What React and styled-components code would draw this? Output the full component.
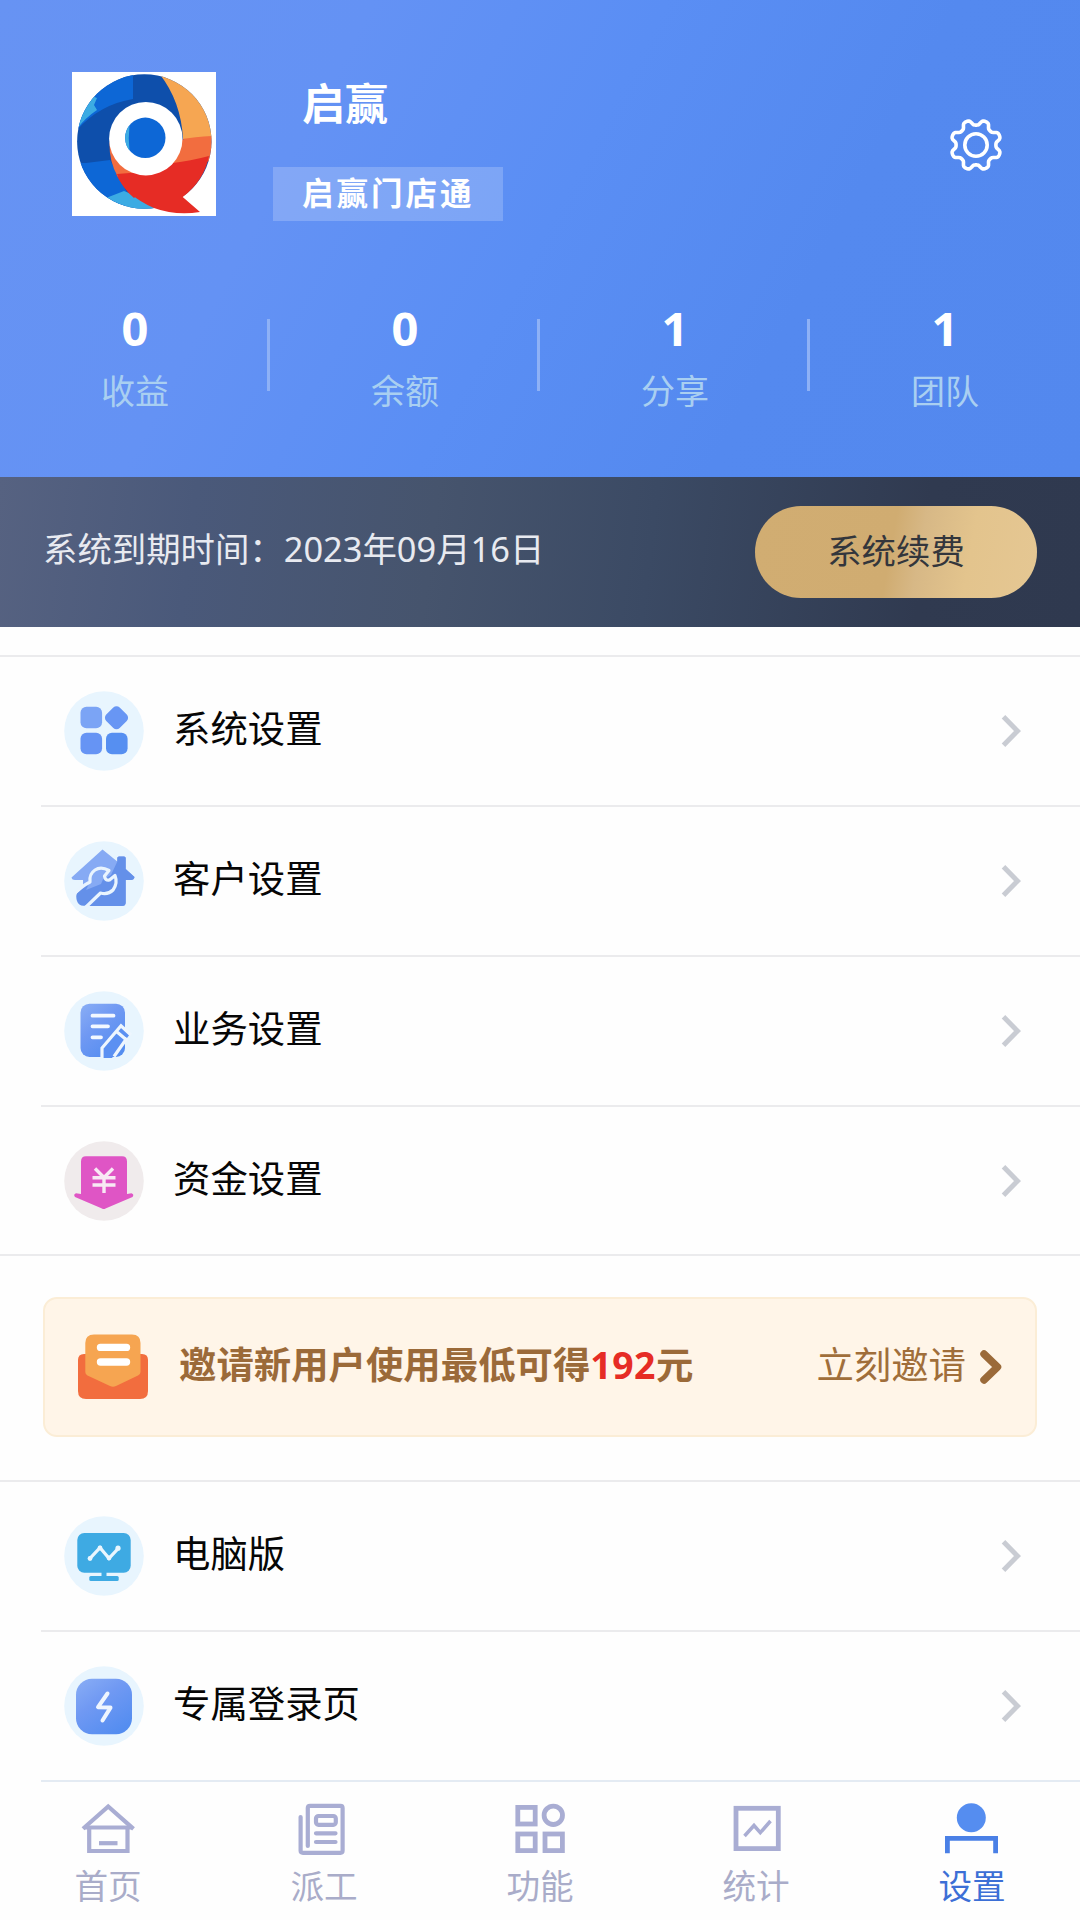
import React from "react";
import styled, { createGlobalStyle } from "styled-components";

const GlobalStyle = createGlobalStyle`
  * {
    box-sizing: border-box;
  }
  body {
    margin: 0;
    background: #fefefe;
    font-family: "Noto Sans", "Noto Sans CJK SC", sans-serif;
  }
  svg {
    display: block;
    flex: none;
  }
`

const Page = styled.div`
  width: 1080px;
  height: 1920px;
  display: flex;
  flex-direction: column;
  overflow: hidden;
`

const Header = styled.header`
  height: 477px;
  flex: none;
  background: linear-gradient(118deg, #6793f3 0%, #6492f4 28%, #5a8ef4 50%, #5489ef 72%, #5388ee 100%);
`

const Profile = styled.div`
  display: flex;
  height: 300px;
  padding: 72px 77px 0 72px;
`

const Identity = styled.div`
  flex: 1;
  margin-left: 57px;
`

const UserName = styled.div`
  height: 95px;
  padding: 0 0 0 29px;
  font-size: 43px;
  line-height: 63px;
  font-weight: 700;
  color: #fff;
`

const ShopBadge = styled.div`
  display: inline-block;
  height: 54px;
  padding: 0 28px 0 29px;
  background: rgba(255, 255, 255, 0.2);
  color: #fff;
  font-size: 31.5px;
  font-weight: 700;
  letter-spacing: 3px;
  line-height: 51px;
`

const GearButton = styled.div`
  padding-top: 46px;
`

const Stats = styled.div`
  display: grid;
  grid-template-columns: repeat(4, 1fr);
`

const Stat = styled.div`
  display: flex;
  flex-direction: column;
  align-items: center;
  height: 120px;
  background: linear-gradient(#8eb1f6, #8eb1f6) no-repeat right 0 top 19px / ${(props) => (props.last ? '0 0' : '3px 72px')};
`

const StatValue = styled.div`
  font-size: 47px;
  line-height: 56px;
  font-weight: 700;
  color: #fff;
`

const StatLabel = styled.div`
  margin-top: 11px;
  font-size: 34px;
  line-height: 48px;
  color: #a9cff1;
`

const ExpiryBar = styled.div`
  display: flex;
  justify-content: space-between;
  align-items: center;
  height: 150px;
  flex: none;
  padding: 0 43px;
  background: linear-gradient(97deg, #566281 0%, #4a597a 18%, #46546d 40%, #3b4a64 60%, #303a50 85%, #2f394f 100%);
`

const ExpiryText = styled.div`
  font-size: 34.4px;
  line-height: 48px;
  color: #e8eaf0;
  padding-bottom: 7px;
`

const RenewButton = styled.div`
  width: 282px;
  height: 92px;
  border-radius: 46px;
  background: linear-gradient(100deg, #d1ad72 0%, #d0ac71 48%, #d7b886 58%, #e3c48d 75%, #e5c793 100%);
  color: #33363c;
  font-size: 34.4px;
  line-height: 90px;
  text-align: center;
`

const Group = styled.section`
  flex: none;
  border-top: 2px solid #ebebed;
  margin-top: ${(props) => props.gap};
`

const Row = styled.div`
  display: flex;
  align-items: center;
  height: ${(props) => props.height || '150px'};
  margin-left: ${(props) => (props.last ? '0' : '41px')};
  padding: 0 58px 0 ${(props) => (props.last ? '64px' : '23px')};
  border-bottom: 2px solid ${(props) => props.line || '#ebebed'};
`

const RowTitle = styled.div`
  flex: 1;
  margin-left: 29px;
  font-size: 37.4px;
  line-height: 54px;
  color: #060606;
  padding-bottom: 4px;
`

const Invite = styled.div`
  display: flex;
  align-items: center;
  flex: none;
  width: 994px;
  height: 140px;
  margin: 41px 0 0 43px;
  padding: 0 32px 0 33px;
  background: #fff5e8;
  border: 2px solid #fbedd6;
  border-radius: 14px;
`

const InviteText = styled.div`
  flex: 1;
  margin-left: 31px;
  font-size: 37.4px;
  line-height: 54px;
  font-weight: 700;
  color: #9b6a39;
  padding-bottom: 4px;
`

const Amount = styled.span`
  color: #e62c25;
  letter-spacing: 0.5px;
`

const InviteLink = styled.div`
  margin-right: 13px;
  font-size: 37.4px;
  line-height: 54px;
  color: #a06e3a;
  padding-bottom: 4px;
`

const TabBar = styled.nav`
  display: grid;
  grid-template-columns: repeat(5, 216px);
  flex: none;
  padding-top: 18px;
`

const Tab = styled.div`
  display: flex;
  flex-direction: column;
  align-items: center;
  color: ${(props) => (props.active ? '#3c6fd6' : '#a9acc9')};
  font-size: 33.6px;
  line-height: 48px;
`

const TabLabel = styled.div`
  margin-top: 2px;
`

const Logo = () => (
    <svg width="144" height="144" viewBox="0 0 144 144">
        <defs>
            <clipPath id="ring"><circle cx="72.3" cy="69.5" r="67.2" /></clipPath>
        </defs>
        <rect width="144" height="144" fill="#fff" />
        <g clipPath="url(#ring)">
            <rect width="144" height="144" fill="#0e4fab" />
            <path d="M0 64 Q24 33 61 27 L61 0 H0Z" fill="#0d67d6" />
            <path d="M0 64 Q10 48 25 38 L22 33 L25 26 L10 20 L0 40Z" fill="#3cabe3" />
            <path d="M0 91 L14 91 L38 88 L60 130 L40 144 L0 140Z" fill="#0d67d6" />
            <path d="M34 126 L52 119 L90 134 L90 144 H34Z" fill="#3cabe3" />
            <path d="M86 0 Q109 28 111 67 L144 67 V0Z" fill="#f6a652" />
            <path d="M108 68 Q125 64 144 64 V88 L98 96Z" fill="#f26d3f" />
        </g>
        <path d="M137 84 Q118 89 101 91 L80 100 L44 102 Q54 124 82 136 Q104 144 128 140 L110.700 125 Q132 109 137 84Z" fill="#e62c25" />
        <path d="M37.500 70 Q37 90 46 105 L62 102Z" fill="#f26d3f" />
        <path d="M45 102 Q50 116 62 126 L80 110 L70 100Z" fill="#e62c25" />
        <circle cx="73.800" cy="66.700" r="36.700" fill="#fff" />
        <circle cx="73.300" cy="65.800" r="20.200" fill="#0d67d6" />
        <path d="M57.500 53.500 A20.200 20.200 0 0 0 57.500 78.500 Q56 66 57.500 53.500Z" fill="#3cabe3" />
    </svg>
)

const gearPath = () => {
    // eight rounded teeth around the centre
    const points = []
    for (let i = 0; i <= 160; i++) {
        const a = (i / 160) * Math.PI * 2
        const wave = Math.cos(8 * (a - Math.PI / 8))
        const r = 22.6 + 2.7 * Math.tanh(wave * 1.6) / Math.tanh(1.6)
        points.push(`${(26 + r * Math.cos(a)).toFixed(2)} ${(26 + r * Math.sin(a)).toFixed(2)}`)
    }
    return `M${points.join('L')}Z`
}

const Gear = () => (
    <svg width="54" height="54" viewBox="-1 -1 54 54" fill="none" stroke="#fff" strokeWidth="3.6" strokeLinejoin="round">
        <path d={gearPath()} />
        <circle cx="26" cy="26" r="11.2" />
    </svg>
)

const Chevron = () => (
    <svg width="22" height="34" viewBox="0 0 22 34" fill="none" stroke="#c9ccd3" strokeWidth="5">
        <path d="M3.500 2.800 L17.500 17 L3.500 31.200" />
    </svg>
)

const Disc = ({ color = '#e8f5fe', children }) => (
    <svg width="80" height="80" viewBox="0 0 80 80">
        <defs>
            <linearGradient id="blue" x1="0" y1="0" x2="0.7" y2="1">
                <stop offset="0" stopColor="#8aaef5" />
                <stop offset="0.45" stopColor="#7099f3" />
                <stop offset="1" stopColor="#548df0" />
            </linearGradient>
        </defs>
        <circle cx="40" cy="40" r="39.8" fill={color} />
        {children}
    </svg>
)

const GridIcon = () => (
    <Disc>
        <rect x="16.500" y="15.700" width="21.600" height="21.600" rx="6" fill="#7ba4f5" />
        <rect x="43" y="17.300" width="19" height="19" rx="4.500" transform="rotate(45 52.500 26.800)" fill="#6896f4" />
        <rect x="16.500" y="41.700" width="21.600" height="21.600" rx="6" fill="#6694f4" />
        <rect x="42" y="41.700" width="21.600" height="21.600" rx="6" fill="#568ff1" />
    </Disc>
)

const HouseIcon = () => (
    <Disc>
        <path d="M38.500 8.500 L53.300 20.500 V17 Q53.300 15.500 55 15.500 H60 Q61.700 15.500 61.700 17 V28 L70.500 36 Q70 39 67 39 H61.700 V61.500 Q61.700 65 58 65 H24 L14 59 L19 47 V39 H11 Q8 39 7.500 36.500Z" fill="#86aaf4" />
        <path d="M53.300 20.500 V17 Q53.300 15.500 55 15.500 H60 Q61.700 15.500 61.700 17 V28 L70.500 36 Q70 39 67 39 H61.700 V61.500 Q61.700 65 58 65 H24 L14 57 L30 44 L47 34Z" fill="#6490e9" />
        <path d="M13 52 L26 41 Q25 33 31 29 Q37 25 45 29.500 L40.500 35 Q41 40 45.500 39 L51 34.500 Q54 42 49 49 Q44 54 36.500 52 L22 64.500 Q15 66 13 60 Q11.500 55 13 52Z" fill="#6490e9" />
        <path d="M26 41 Q25 33 31 29 Q37 25 45 29.500 L40.500 35 L37 43 L22 49Z" fill="#86aaf4" />
        <path d="M9 54.500 Q16 46 26 41 Q25 33 31 29 Q37 25 45 29.500 L40.500 35 Q41 40 45.500 39 L51 34.500 Q54 42 49 49 Q44 54 36.500 52 L21.500 66.500" fill="none" stroke="#e9f4fe" strokeWidth="3.200" strokeLinejoin="round" />
    </Disc>
)

const DocIcon = () => (
    <Disc>
        <rect x="16.500" y="12.700" width="44.500" height="53.300" rx="9" fill="url(#blue)" />
        <path d="M38 67 V57 L57 35 L66 43 L48 67Z" fill="#5b90f2" />
        <path d="M38 67 V57 L57 34.800 L67 44 M52.500 40.500 L62 48.500 M63 47 L50 65.500" fill="none" stroke="#eef6fe" strokeWidth="3.200" />
        <path d="M28.500 24.700 H49.500 M28.500 35.300 H44 M28.500 46.300 H37" stroke="#f3f8ff" strokeWidth="3.800" strokeLinecap="round" />
    </Disc>
)

const YuanIcon = () => (
    <Disc color="#f0ebec">
        <path d="M22 15.300 H58 Q63 15.300 63 20.500 V53 L67.500 52.300 Q70.500 53.500 68.500 56 L41.500 67.500 Q39.700 68.500 38 67.500 L11 56 Q9 53.500 12 52.300 L17 53 V20.500 Q17 15.300 22 15.300Z" fill="#df55c5" />
        <path d="M31 27.500 L40 36.500 L49 27.500 M28.500 36.800 H51.500 M28.500 44 H51.500 M40 36.500 V52" fill="none" stroke="#f8e9f4" strokeWidth="3.400" />
    </Disc>
)

const MonitorIcon = () => (
    <Disc>
        <rect x="13.300" y="17" width="53.400" height="39.700" rx="7" fill="#3eaae3" />
        <rect x="37.500" y="56" width="5" height="6" fill="#3eaae3" />
        <rect x="25.300" y="60" width="29.400" height="5" rx="1.500" fill="#3eaae3" />
        <path d="M26 42.300 L36 31.700 L45 42.300 L54.300 32.300" fill="none" stroke="#eaf6fe" strokeWidth="3.200" />
        <g fill="#eaf6fe">
            <circle cx="26" cy="42.500" r="2.400" />
            <circle cx="36" cy="32" r="2.400" />
            <circle cx="45" cy="42" r="2.400" />
            <circle cx="54" cy="32.200" r="2.600" />
        </g>
    </Disc>
)

const FlashIcon = () => (
    <Disc>
        <rect x="12" y="12.700" width="56" height="55.600" rx="16" fill="url(#blue)" />
        <path d="M43.500 27.500 L34 41.200 L46.500 41.600 L38.500 54.500" fill="none" stroke="#eef5fe" strokeWidth="4" strokeLinecap="round" strokeLinejoin="round" />
    </Disc>
)

const EnvelopeIcon = () => (
    <svg width="70" height="66" viewBox="0 0 70 66">
        <path d="M6 20 H64 Q70 20 70 26 V57 Q70 65 62 65 H8 Q0 65 0 57 V26 Q0 20 6 20Z" fill="#f26d3e" />
        <path d="M16 0.500 H54 Q62.500 0.500 62.500 9 V38 Q62.500 40 60 41.500 L38 52 Q35 53.500 32 52 L9.500 41.500 Q7.300 40 7.300 38 V9 Q7.300 0.500 16 0.500Z" fill="#f6a551" />
        <path d="M22.500 13.400 H48.500 M22.500 28 H48.500" stroke="#fff" strokeWidth="7.400" strokeLinecap="round" />
    </svg>
)

const InviteArrow = () => (
    <svg width="24" height="36" viewBox="0 0 24 36" fill="none" stroke="#9b6a39" strokeWidth="7.500" strokeLinecap="round" strokeLinejoin="round">
        <path d="M5 5 L18.500 18 L5 31" />
    </svg>
)

const TabSvg = ({ children }) => (
    <svg width="60" height="60" viewBox="0 0 60 60" fill="none" stroke="#a9add3" strokeWidth="4.200">
        {children}
    </svg>
)

const HomeTab = () => (
    <TabSvg>
        <path d="M5 28.800 L30.200 6.500 L55.500 28.800" />
        <path d="M6 27.500 H54" />
        <path d="M11.200 28 V51 H49.500 V28" />
        <path d="M21 43.200 H39.500" />
    </TabSvg>
)

const NewsTab = () => (
    <TabSvg>
        <path d="M13.800 46 V8 Q13.800 5.800 16 5.800 H46.500 Q48.600 5.800 48.600 8 V50.500 Q48.600 52.800 46.500 52.800 H9 Q6.600 52.800 6.600 50.500 V17" strokeLinecap="round" />
        <rect x="22" y="16" width="19.800" height="8.800" rx="2.500" />
        <path d="M22 33.300 H41.500 M22 42 H41.500" strokeLinecap="round" />
    </TabSvg>
)

const FunctionTab = () => (
    <TabSvg>
        <g strokeWidth="4.800">
            <rect x="7.800" y="7.400" width="17.400" height="16.600" />
            <circle cx="43.300" cy="15.300" r="9.200" />
            <rect x="7.800" y="34" width="17.400" height="16.600" />
            <rect x="35" y="34" width="17.400" height="16.600" />
        </g>
    </TabSvg>
)

const StatsTab = () => (
    <TabSvg>
        <rect x="10" y="8.300" width="42.300" height="40.300" strokeWidth="4.800" />
        <path d="M18.500 36 L28 25.500 L34.300 32.700 L44.500 21" strokeWidth="3.500" />
    </TabSvg>
)

const SettingsTab = () => (
    <TabSvg>
        <circle cx="29.300" cy="17.700" r="14.500" fill="#558df0" stroke="none" />
        <path d="M5.400 53.300 V38.300 H53.600 V53.300" stroke="#4a80e6" strokeWidth="4.800" />
    </TabSvg>
)

const stats = [
    { value: 0, label: '收益' },
    { value: 0, label: '余额' },
    { value: 1, label: '分享' },
    { value: 1, label: '团队' },
]

const settings = [
    { title: '系统设置', Icon: GridIcon },
    { title: '客户设置', Icon: HouseIcon },
    { title: '业务设置', Icon: DocIcon },
    { title: '资金设置', Icon: YuanIcon, height: '149px' },
]

const extras = [
    { title: '电脑版', Icon: MonitorIcon },
    { title: '专属登录页', Icon: FlashIcon, line: '#e4ebf3' },
]

const tabs = [
    { label: '首页', Icon: HomeTab },
    { label: '派工', Icon: NewsTab },
    { label: '功能', Icon: FunctionTab },
    { label: '统计', Icon: StatsTab },
    { label: '设置', Icon: SettingsTab, active: true },
]

const MenuRow = ({ title, Icon, height, line, last }) => (
    <Row height={height} line={line} last={last}>
        <Icon />
        <RowTitle>{title}</RowTitle>
        <Chevron />
    </Row>
)

export default function App() {
    return (
        <>
            <GlobalStyle />
            <Page>
                <Header>
                    <Profile>
                        <Logo />
                        <Identity>
                            <UserName>启赢</UserName>
                            <ShopBadge>启赢门店通</ShopBadge>
                        </Identity>
                        <GearButton><Gear /></GearButton>
                    </Profile>
                    <Stats>
                        {stats.map((item, idx) => (
                            <Stat key={item.label} last={idx === stats.length - 1}>
                                <StatValue>{item.value}</StatValue>
                                <StatLabel>{item.label}</StatLabel>
                            </Stat>
                        ))}
                    </Stats>
                </Header>
                <ExpiryBar>
                    <ExpiryText>系统到期时间：2023年09月16日</ExpiryText>
                    <RenewButton>系统续费</RenewButton>
                </ExpiryBar>
                <Group gap="28px">
                    {settings.map((item, idx) => (
                        <MenuRow key={item.title} {...item} last={idx === settings.length - 1} />
                    ))}
                </Group>
                <Invite>
                    <EnvelopeIcon />
                    <InviteText>邀请新用户使用最低可得<Amount>192</Amount>元</InviteText>
                    <InviteLink>立刻邀请</InviteLink>
                    <InviteArrow />
                </Invite>
                <Group gap="43px">
                    {extras.map((item) => <MenuRow key={item.title} {...item} />)}
                </Group>
                <TabBar>
                    {tabs.map(({ label, Icon, active }) => (
                        <Tab key={label} active={active}>
                            <Icon />
                            <TabLabel>{label}</TabLabel>
                        </Tab>
                    ))}
                </TabBar>
            </Page>
        </>
    )
}
